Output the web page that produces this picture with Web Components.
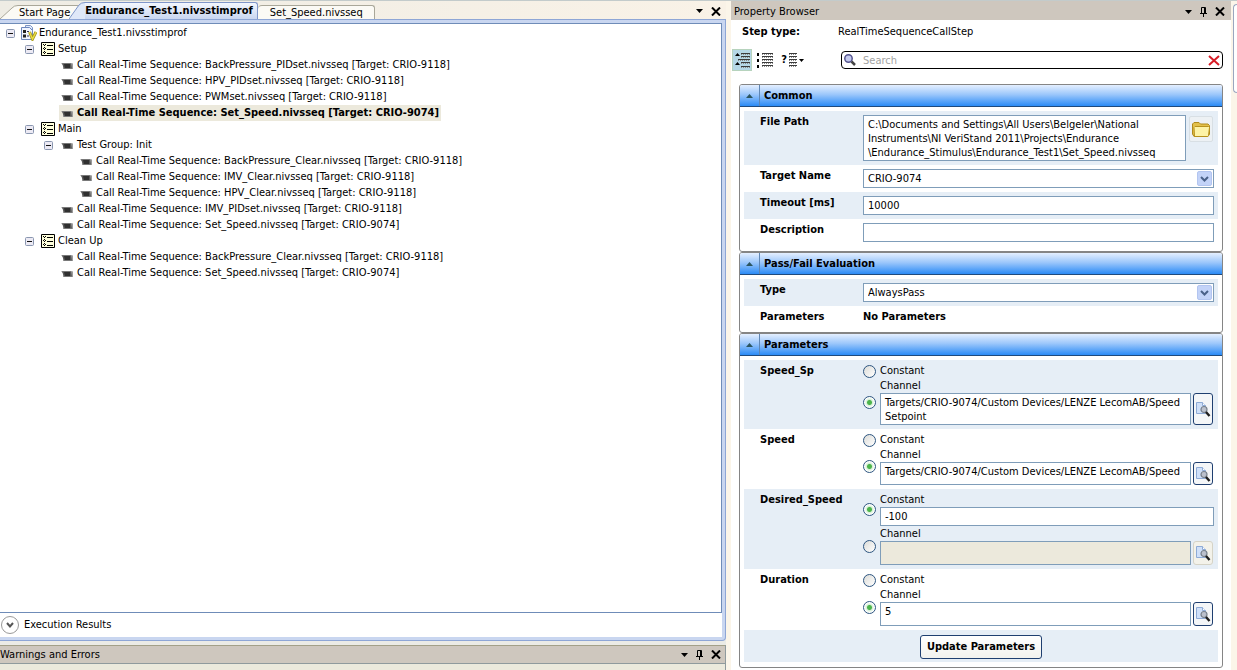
<!DOCTYPE html>
<html lang="en">
<head>
<meta charset="utf-8">
<title>Stimulus Profile Editor</title>
<style>
  :root {
    --ui-font: "DejaVu Sans Condensed", "DejaVu Sans", "Noto Sans", sans-serif;
    --field-border: #7f9db9;
    --tint: #e6eef6;
    --cream: #fbf5e9;
  }
  html, body { margin: 0; height: 100%; }
  body { font: 11px/14px var(--ui-font); color: #000; background: var(--cream); }
</style>
</head>
<body>
<workspace-shell>
  <editor-pane slot="left">
    <doc-tab slot="tabs" label="Start Page"></doc-tab>
    <doc-tab slot="tabs" label="Endurance_Test1.nivsstimprof" active></doc-tab>
    <doc-tab slot="tabs" label="Set_Speed.nivsseq"></doc-tab>
    <tree-node label="Endurance_Test1.nivsstimprof" icon="profile" branch>
      <tree-node label="Setup" icon="list" branch>
        <tree-node label="Call Real-Time Sequence: BackPressure_PIDset.nivsseq [Target: CRIO-9118]"></tree-node>
        <tree-node label="Call Real-Time Sequence: HPV_PIDset.nivsseq [Target: CRIO-9118]"></tree-node>
        <tree-node label="Call Real-Time Sequence: PWMset.nivsseq [Target: CRIO-9118]"></tree-node>
        <tree-node label="Call Real-Time Sequence: Set_Speed.nivsseq [Target: CRIO-9074]" selected></tree-node>
      </tree-node>
      <tree-node label="Main" icon="list" branch>
        <tree-node label="Test Group: Init" branch>
          <tree-node label="Call Real-Time Sequence: BackPressure_Clear.nivsseq [Target: CRIO-9118]"></tree-node>
          <tree-node label="Call Real-Time Sequence: IMV_Clear.nivsseq [Target: CRIO-9118]"></tree-node>
          <tree-node label="Call Real-Time Sequence: HPV_Clear.nivsseq [Target: CRIO-9118]"></tree-node>
        </tree-node>
        <tree-node label="Call Real-Time Sequence: IMV_PIDset.nivsseq [Target: CRIO-9118]"></tree-node>
        <tree-node label="Call Real-Time Sequence: Set_Speed.nivsseq [Target: CRIO-9074]"></tree-node>
      </tree-node>
      <tree-node label="Clean Up" icon="list" branch>
        <tree-node label="Call Real-Time Sequence: BackPressure_Clear.nivsseq [Target: CRIO-9118]"></tree-node>
        <tree-node label="Call Real-Time Sequence: Set_Speed.nivsseq [Target: CRIO-9074]"></tree-node>
      </tree-node>
    </tree-node>
  </editor-pane>
  <warnings-pane slot="left"></warnings-pane>
  <property-browser slot="right">
    <prop-section heading="Common">
      <path-row label="File Path" value="C:\Documents and Settings\All Users\Belgeler\National&#10;Instruments\NI VeriStand 2011\Projects\Endurance&#10;\Endurance_Stimulus\Endurance_Test1\Set_Speed.nivsseq" tinted></path-row>
      <select-row label="Target Name" value="CRIO-9074"></select-row>
      <text-row label="Timeout [ms]" value="10000" tinted></text-row>
      <text-row label="Description" value=""></text-row>
    </prop-section>
    <prop-section heading="Pass/Fail Evaluation">
      <select-row label="Type" value="AlwaysPass" tinted></select-row>
      <static-row label="Parameters" value="No Parameters"></static-row>
    </prop-section>
    <prop-section heading="Parameters">
      <channel-row label="Speed_Sp" value="Targets/CRIO-9074/Custom Devices/LENZE LecomAB/Speed&#10;Setpoint" size="tall" tinted></channel-row>
      <channel-row label="Speed" value="Targets/CRIO-9074/Custom Devices/LENZE LecomAB/Speed" size="short"></channel-row>
      <channel-row label="Desired_Speed" constant="-100" tinted></channel-row>
      <channel-row label="Duration" value="5"></channel-row>
      <action-row label="Update Parameters"></action-row>
    </prop-section>
  </property-browser>
</workspace-shell>

<script>
const esc = s => (s || '').replace(/&/g, '&amp;').replace(/</g, '&lt;').replace(/"/g, '&quot;');

// A text line as drawn in the view-mode icons: a dark stroke with a dotted underside.
const wave = (x, y, w) => `<path d="M${x} ${y + 0.5}h${w}" stroke="#3c3c3c"/><path d="M${x} ${y + 1.5}h${w}" stroke="#8a8a8a" stroke-dasharray="1 1"/>`;
const waves = (x, w, ys) => ys.map(y => wave(x, y, w)).join('');

const ICONS = {
  down: '<svg width="7" height="4" viewBox="0 0 7 4"><path d="M0 0h7L3.5 4z"/></svg>',
  downSmall: '<svg width="5" height="3" viewBox="0 0 5 3"><path d="M0 0h5L2.5 3z"/></svg>',
  close: '<svg width="10" height="9" viewBox="0 0 10 9"><path d="M1 .5l8 8M9 .5l-8 8" stroke="#000" stroke-width="2"/></svg>',
  pin: '<svg width="7" height="10" viewBox="0 0 7 10"><path d="M1.5 6V.5h4V6M0 6.5h7M3.5 7v3" fill="none" stroke="#000"/><path d="M4.500 1v5" stroke="#000"/></svg>',
  up: '<svg width="7" height="4" viewBox="0 0 7 4"><path d="M0 4h7L3.5 0z" fill="#2c5560"/></svg>',
  profile: '<svg width="16" height="16" viewBox="0 0 16 16"><path d="M4.5.5h5l2 2v9h-7z" fill="#dfe9fb" stroke="#7b93c4"/><path d="M.5 2.5h8l3 3v9H.5z" fill="#f1f5ff" stroke="#6d87bd"/><path d="M2 5h3v3H2zM2 9.500h3v3H2z" fill="#222"/><path d="M6 6.500h2M6 11h2" stroke="#335"/><path d="M8.500 7l3 7 3.500-7" fill="none" stroke="#a2951a" stroke-width="3"/><path d="M8.500 7l3 7 3.500-7" fill="none" stroke="#e9dc48" stroke-width="1.400"/></svg>',
  list: '<svg width="14" height="14" viewBox="0 0 14 14"><path d="M.5.5h13v13H.5z" fill="#ffffdc" stroke="#000"/><path d="M6 3.500h6M6 7.500h6M6 11.500h6" stroke="#000"/><path d="M2 2.500h1M4 2.500h1M3 3.500h1M2 6.500h1M4 6.500h1M3 7.500h1M2 10.500h1M4 10.500h1M3 11.500h1M3 5.500h1M3 9.500h1" stroke="#000"/></svg>',
  step: '<svg width="12" height="7" viewBox="0 0 12 7"><path d="M0 1h10l2 .5V7H2V3z" fill="#9a9a9a"/><path d="M1 1.500h9l1 5H3z" fill="#585858"/><path d="M3 2h6v4H4z" fill="#303030"/></svg>',
  minus: '<svg width="9" height="9" viewBox="0 0 9 9"><rect x=".5" y=".5" width="8" height="8" rx="1" fill="#eceaf4" stroke="#8a97b0"/><path d="M2 4.500h5" stroke="#111"/></svg>',
  chevron: '<svg width="9" height="6" viewBox="0 0 9 6"><path d="M1 1l3.500 3.500L8 1" fill="none" stroke="#4a6189" stroke-width="2"/></svg>',
  results: '<svg width="18" height="18" viewBox="0 0 18 18"><circle cx="9" cy="9" r="8.500" fill="#fff" stroke="#999"/><path d="M6 7l3 3.500L12 7" fill="none" stroke="#555" stroke-width="2"/></svg>',
  folder: '<svg width="20" height="17" viewBox="0 0 20 17"><path d="M1.500 13V3l1.500-1.500h5L9.500 3H17l1.500 1.500V13L17 15.500H3z" fill="#e3c04a" stroke="#b08a1c"/><path d="M3 6.500l1-1h13.500l1 1-1 8-1 1H3.500z" fill="#fdf3a6" stroke="#b8921c"/></svg>',
  lookup: '<svg width="15" height="16" viewBox="0 0 15 16"><path d="M.5 1.500h6l3 3v8h-9z" fill="#cfe0f9" stroke="#8eabd6"/><path d="M6.500 1.500v3h3" fill="#fff" stroke="#8eabd6"/><circle cx="8" cy="8.500" r="3" fill="#b9bec8" fill-opacity=".9" stroke="#77808c" stroke-width="1.200"/><path d="M10 11l3.500 4" stroke="#1e1e1e" stroke-width="2.400"/></svg>',
  search: '<svg width="12" height="12" viewBox="0 0 12 12"><circle cx="4.500" cy="4.500" r="3.700" fill="#c4caee" stroke="#55558f" stroke-width="1.500"/><path d="M7.500 7.500l3.500 3.500" stroke="#444" stroke-width="2.500"/></svg>',
  clear: '<svg width="12" height="11" viewBox="0 0 12 11"><path d="M1 1l10 9M11 1L1 10" stroke="#d81e28" stroke-width="2"/></svg>',
  grouped: `<svg width="15" height="17" viewBox="0 0 15 17"><path d="M0 4h5L2.500 1zM0 13h5l-2.500-3z"/>${waves(6, 9, [1, 4, 10, 14])}${wave(3, 7, 12)}</svg>`,
  flat: `<svg width="16" height="15" viewBox="0 0 16 15"><path d="M0 0h2v3H0zM0 6h2v3H0zM0 12h2v3H0z"/>${waves(5, 11, [0, 3, 6, 9, 12])}</svg>`,
  lines: `<svg width="8" height="15" viewBox="0 0 8 15">${waves(0, 8, [0, 3, 6, 9, 12])}</svg>`
};

const RESET = `
  * { box-sizing: border-box; }
  svg { display: block; flex: none; }
  button, input, textarea, select { font: inherit; color: inherit; margin: 0; padding: 0; }
  button { border: 0; background: none; display: flex; align-items: center; justify-content: center; }
`;

function define(name, css, html) {
  customElements.define(name, class extends HTMLElement {
    connectedCallback() {
      if (this.shadowRoot) return;
      this.attachShadow({ mode: 'open' }).innerHTML =
        `<style>${RESET}${css}</style>` + html(this);
    }
  });
}

const WINDOW_BUTTONS = pin => `
  <button aria-label="Window menu">${ICONS.down}</button>
  ${pin ? `<button aria-label="Auto hide">${ICONS.pin}</button>` : ''}
  <button aria-label="Close">${ICONS.close}</button>`;

define('workspace-shell', `
  :host { display: grid; grid-template-columns: 731fr 500fr 6px; min-height: 100vh; box-sizing: border-box;
    background: var(--cream); border-top: 1px solid #c3cbcb; }
  .left { display: flex; flex-direction: column; min-width: 0; margin-right: 5px; background: #ebebe6; }
  .right { min-width: 0; display: flex; flex-direction: column; }
  aside { margin: 3px 0 0 2px; height: 89px; border: 1px solid #9aa6bf; border-right: 0;
    border-radius: 4px 0 0 4px; background: #fff; }
`, () => `
  <div class="left"><slot name="left"></slot></div>
  <div class="right"><slot name="right"></slot></div>
  <aside></aside>`);

define('editor-pane', `
  :host { flex: 1; display: flex; flex-direction: column; min-height: 0; }
  header { height: 18px; display: flex; align-items: flex-end; background: linear-gradient(90deg, #eeece4, #f9f2e7); }
  .tabs { display: flex; align-items: flex-end; flex: 1; min-width: 0; }
  .tools { display: flex; align-items: center; gap: 8px; height: 16px; padding-right: 5px; }
  .frame { flex: 1; display: flex; flex-direction: column; border: 1px solid #8ea6d6; border-left: 0;
    border-radius: 0 0 4px 0; background: #c9d6f0; padding: 3px 3px 3px 0; }
  main { flex: 1; background: #fff; border: 1px solid #6f8cb8; border-left: 0; padding-top: 1px; }
  footer { height: 24px; background: #fff; display: flex; align-items: center; gap: 5px; padding-left: 1px; }
`, () => `
  <header>
    <div class="tabs" role="tablist"><slot name="tabs"></slot></div>
    <div class="tools">${WINDOW_BUTTONS(false)}</div>
  </header>
  <div class="frame">
    <main><slot></slot></main>
    <footer><button aria-label="Expand results">${ICONS.results}</button><span>Execution Results</span></footer>
  </div>`);

define('doc-tab', `
  :host { display: block; flex: none; }
  button { height: 14px; align-items: stretch; }
  span { display: flex; align-items: center; padding: 0 9px 0 1px; border: 1px solid #a9a799; border-width: 1px 1px 0 0;
    border-radius: 0 3px 0 0; background: #fbfaf5; }
  :host([active]) { font-weight: bold; position: relative; margin-left: -11px; }
  :host([active]) button { height: 17px; }
  :host([active]) span { border-color: #7f96c9; background: linear-gradient(#f3f7fe, #c9d6f0); padding: 0 4px 0 0; }
  :host(:last-of-type) span { padding: 0 11px 0 12px; border-width: 1px 1px 0 0; border-radius: 4px 3px 0 0; }
`, el => {
  const active = el.hasAttribute('active');
  const last = !el.nextElementSibling || el.nextElementSibling.localName !== 'doc-tab';
  const h = active ? 17 : 14, w = active ? 16 : 18;
  const fill = active ? '#dfe8f8' : '#fbfaf5', line = active ? '#7f96c9' : '#a9a799';
  const slant = last ? '' : `<svg width="${w}" height="${h}" viewBox="0 0 ${w} ${h}"><path d="M0 ${h}L${w - 6} 3Q${w - 4} .5 ${w} .5V${h}z" fill="${fill}"/><path d="M0 ${h}L${w - 6} 3Q${w - 4} .5 ${w} .5" fill="none" stroke="${line}"/></svg>`;
  return `<button role="tab" aria-selected="${active}">${slant}<span>${esc(el.getAttribute('label'))}</span></button>`;
});

define('tree-node', `
  :host { display: block; }
  .row { display: flex; align-items: center; height: 16px; padding-left: 6px; }
  .toggle { width: 9px; height: 9px; flex: none; }
  .item { display: flex; align-items: center; height: 16px; margin-left: 6px; gap: 2px; white-space: nowrap; }
  .icon { width: 16px; display: flex; justify-content: center; }
  :host([selected]) .item { background: #ece9dc; font-weight: bold; padding-right: 2px; }
  .children { padding-left: 19px; }
`, el => `
  <div class="row" role="treeitem">
    ${el.hasAttribute('branch') ? `<button class="toggle" aria-label="Collapse">${ICONS.minus}</button>` : '<span class="toggle"></span>'}
    <span class="item"><span class="icon">${ICONS[el.getAttribute('icon') || 'step']}</span><span>${esc(el.getAttribute('label'))}</span></span>
  </div>
  <div class="children"><slot></slot></div>`);

define('warnings-pane', `
  :host { display: block; margin-top: 4px; height: 25px; background: #ebe9dc; border-right: 1px solid #8f9a9d; }
  header { height: 19px; display: flex; align-items: center; gap: 8px; padding-right: 4px; background: #cec7be;
    border-top: 1px solid #a3a088; border-bottom: 1px solid #8f9a9d; }
  h2 { font: inherit; margin: 0; flex: 1; }
`, () => `<header><h2>Warnings and Errors</h2>${WINDOW_BUTTONS(true)}</header>`);

define('property-browser', `
  :host { flex: 1; display: flex; flex-direction: column; background: #fff; }
  header { height: 19px; display: flex; align-items: center; gap: 8px; padding: 2px 6px 0 3px; background: #cec7be; }
  h2 { font: inherit; margin: 0; flex: 1; }
  .type { display: flex; height: 24px; align-items: center; padding-left: 11px; }
  .type b { width: 96px; }
  .bar { display: flex; height: 32px; align-items: center; padding: 0 8px 0 1px; }
  .modes button { height: 22px; }
  .modes { display: flex; width: 109px; }
  .modes .on { width: 20px; background: #b5d7e6; border: 1px solid #b6d3bd; }
  .modes .flat { width: 26px; }
  .modes .help { width: 29px; gap: 2px; font-weight: bold; }
  .search { flex: 1; height: 18px; display: flex; align-items: center; gap: 7px; border: 1px solid #000; border-radius: 4px; padding: 0 2px; background: #fff; }
  input { flex: 1; min-width: 0; border: 0; outline: 0; height: 16px; background: none; }
  input::placeholder { color: #a3a3a3; opacity: 1; }
  .sections { padding: 8px 8px 2px 8px; }
`, () => `
  <header><h2>Property Browser</h2>${WINDOW_BUTTONS(true)}</header>
  <div class="type"><b>Step type:</b><span>RealTimeSequenceCallStep</span></div>
  <div class="bar">
    <div class="modes">
      <button class="on" aria-label="Grouped view">${ICONS.grouped}</button>
      <button class="flat" aria-label="Flat view">${ICONS.flat}</button>
      <button class="help" aria-label="Help options">?${ICONS.lines}${ICONS.downSmall}</button>
    </div>
    <div class="search">${ICONS.search}<input type="text" placeholder="Search" aria-label="Search"><button aria-label="Clear search">${ICONS.clear}</button></div>
  </div>
  <div class="sections"><slot></slot></div>`);

define('prop-section', `
  :host { display: block; border: 1px solid #858585; border-radius: 3px; background: #fff; }
  header { height: 22px; display: flex; align-items: stretch; border-bottom: 1px solid #1f4a7d;
    background: linear-gradient(#e4efff, #9cc7fb 45%, #2b8bf6); border-radius: 2px 2px 0 0; }
  header button { width: 20px; border-right: 1px solid #5f86b4; }
  h3 { font: inherit; font-weight: bold; margin: 0; padding: 1px 0 0 4px; display: flex; align-items: center; }
  .rows { padding: 4px 4px 5px; }
`, el => `
  <header><button aria-label="Collapse section">${ICONS.up}</button><h3>${esc(el.getAttribute('heading'))}</h3></header>
  <div class="rows"><slot></slot></div>`);

const ROW = `
  :host { display: grid; grid-template-columns: 103px minmax(0, 1fr); padding: 4px 4px 4px 16px; }
  :host([tinted]) { background: var(--tint); }
  .name { font-weight: bold; }
  input[type=text], textarea, select { display: block; width: 100%; background: #fff; border: 1px solid var(--field-border);
    border-radius: 0; outline: 0; padding: 0 4px; }
  input[type=text], select { height: 19px; }
  textarea { resize: none; overflow: hidden; white-space: pre; padding-top: 2px; }
`;

define('text-row', ROW, el => `
  <label class="name" for="f">${esc(el.getAttribute('label'))}</label>
  <input id="f" type="text" value="${esc(el.getAttribute('value'))}">`);

define('static-row', ROW + `
  :host { padding-bottom: 3px; }
`, el => `
  <span class="name">${esc(el.getAttribute('label'))}</span><b>${esc(el.getAttribute('value'))}</b>`);

define('select-row', ROW + `
  .wrap { position: relative; }
  select { appearance: none; padding-right: 20px; }
  .arrow { position: absolute; right: 2px; top: 2px; width: 15px; height: 15px; display: grid; place-items: center;
    background: #c3d3f8; border: 1px solid #b3c5f0; border-radius: 2px; pointer-events: none; }
`, el => `
  <label class="name" for="f">${esc(el.getAttribute('label'))}</label>
  <div class="wrap"><select id="f"><option>${esc(el.getAttribute('value'))}</option></select><span class="arrow">${ICONS.chevron}</span></div>`);

define('path-row', ROW + `
  .wrap { display: flex; align-items: flex-start; gap: 3px; padding-right: 1px; }
  textarea { flex: 1; min-width: 0; height: 46px; }
  button { width: 24px; height: 26px; margin-top: 1px; border: 1px solid #d8dfe4; border-radius: 2px; background: #edf1f4; }
`, el => `
  <label class="name" for="f">${esc(el.getAttribute('label'))}</label>
  <div class="wrap"><textarea id="f" wrap="off">${esc(el.getAttribute('value'))}</textarea><button aria-label="Browse">${ICONS.folder}</button></div>`);

define('channel-row', ROW + `
  .choices { display: grid; gap: 1px; }
  .choice { display: grid; grid-template-columns: 17px minmax(0, 1fr); align-items: center; }
  input[type=radio] { appearance: none; width: 13px; height: 13px; border: 1px solid #2d5580; border-radius: 50%;
    background: linear-gradient(135deg, #dcdcd8, #fff); }
  input[type=radio]:checked { background: radial-gradient(circle, #4cb44c 0 2px, #d7f0d7 3px, #fff 5px); }
  .choice label { display: block; }
  .line { display: flex; gap: 2px; padding-right: 1px; }
  textarea { flex: 1; min-width: 0; height: 24px; }
  :host([size=tall]) textarea { height: 32px; }
  :host([size=short]) textarea { height: 23px; }
  textarea:disabled { background: #ece9dc; }
  .line button { width: 20px; border: 1px solid #1f3f70; border-radius: 3px; background: #f4f6f8; }
  .line button:disabled { border-color: #d5d3c6; background: #f3f2ea; }
`, el => {
  const c = el.getAttribute('constant');
  const has = c !== null;
  return `
  <span class="name" id="n">${esc(el.getAttribute('label'))}</span>
  <div class="choices" role="radiogroup" aria-labelledby="n">
    <div class="choice"><input type="radio" id="c" name="mode" ${has ? 'checked' : ''}>
      <div><label for="c">Constant</label>${has ? `<input type="text" aria-label="Constant value" value="${esc(c)}">` : ''}</div></div>
    <div class="choice"><input type="radio" id="h" name="mode" ${has ? '' : 'checked'}>
      <div><label for="h">Channel</label><div class="line"><textarea aria-label="Channel path" wrap="off" ${has ? 'disabled' : ''}>${esc(el.getAttribute('value'))}</textarea><button aria-label="Pick channel" ${has ? 'disabled' : ''}>${ICONS.lookup}</button></div></div></div>
  </div>`;
});

define('action-row', `
  :host { display: flex; justify-content: center; padding: 5px 0 3px; background: var(--tint); }
  button { height: 24px; padding: 0 6px; font-weight: bold; border: 1px solid #1f3f70; border-radius: 3px;
    background: linear-gradient(#fff, #f2f2ee); }
`, el => `<button>${esc(el.getAttribute('label'))}</button>`);
</script>
</body>
</html>
